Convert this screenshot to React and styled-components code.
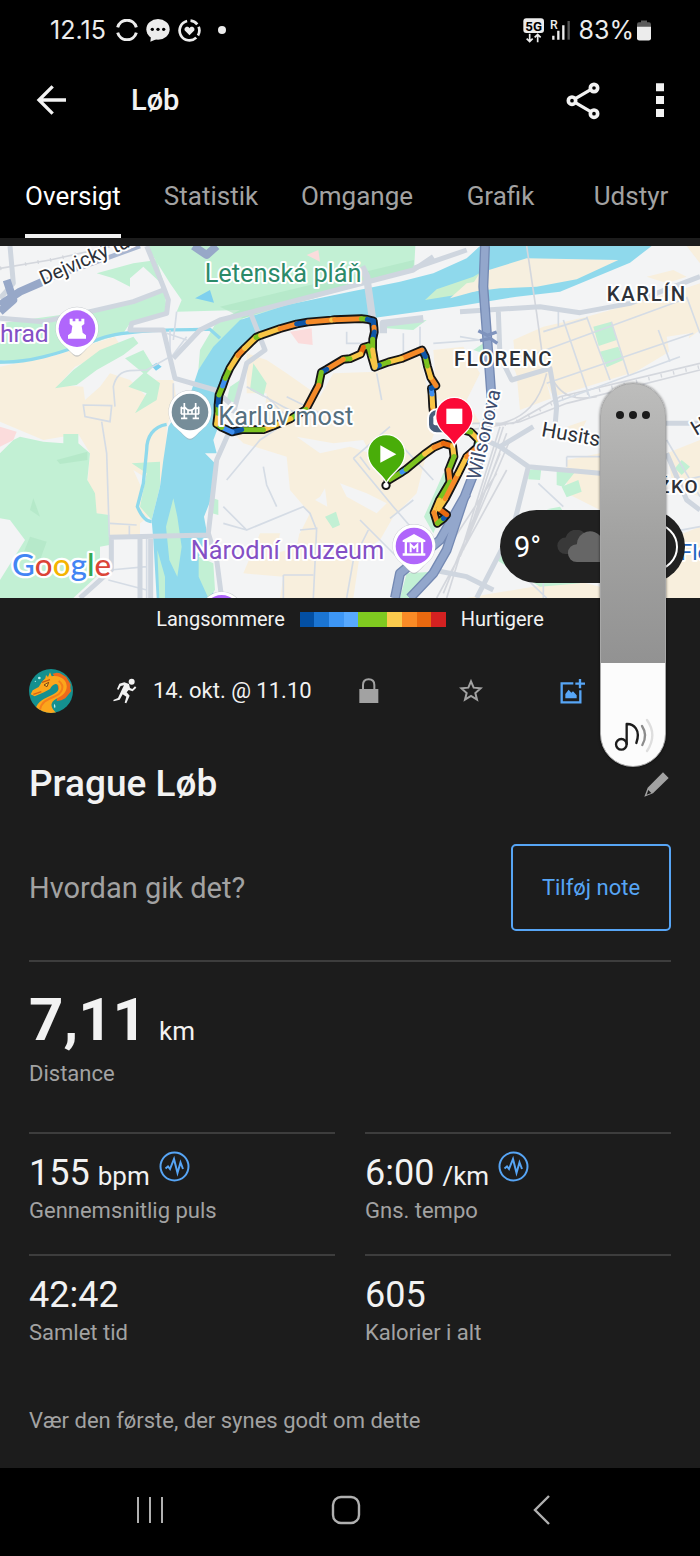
import React, { useState } from "react";
import styled, { createGlobalStyle } from "styled-components";

const GlobalStyle = createGlobalStyle`
  *, *::before, *::after { box-sizing: border-box; }
  body { margin: 0; background: #000; }
  button { appearance: none; border: 0; background: none; padding: 0; margin: 0; font: inherit; color: inherit; cursor: pointer; }
  svg { display: block; }
`;

const color = {
  surface: "#1c1c1c",
  text: "#f2f2f2",
  muted: "#a2a2a2",
  line: "#3d3d3d",
  accent: "#57a5f5",
};

/* ---------- Page frame ---------- */

const Page = styled.div`
  position: relative;
  overflow: hidden;
  display: flex;
  flex-direction: column;
  min-height: 100vh;
  background: #000;
  color: ${color.text};
  font-family: Roboto, "Liberation Sans", sans-serif;
`;

const StatusBar = styled.div`
  display: flex;
  align-items: center;
  justify-content: space-between;
  height: 60px;
  padding: 0 49px 0 50px;
  font-family: Inter, Roboto, sans-serif;
  font-size: 25px;
  line-height: 32px;
  color: #ececec;
`;

const StatusGroup = styled.div`
  display: flex;
  align-items: center;
  gap: ${(p) => p.$gap}px;
`;

const AppBar = styled.header`
  display: flex;
  align-items: center;
  height: 80px;
  padding: 0 36px;
`;

const AppTitle = styled.h1`
  flex: 1;
  margin: 0 0 0 64px;
  font-size: 29px;
  line-height: 36px;
  font-weight: 500;
`;

const IconButton = styled.button`
  display: flex;
  align-items: center;
  justify-content: center;
  margin-left: ${(p) => p.$before || 0}px;
`;

const Tabs = styled.nav`
  display: grid;
  grid-template-columns:
    minmax(0, 138fr) minmax(0, 138fr) minmax(0, 154fr)
    minmax(0, 133fr) minmax(0, 128fr);
  justify-items: center;
  padding: 0 5px 0 4px;
`;

const Tab = styled.button`
  padding: 40px 0 22px;
  font-size: 26px;
  line-height: 32px;
  white-space: nowrap;
  color: ${(p) => (p.$active ? "#fff" : color.muted)};
  border-bottom: 4px solid ${(p) => (p.$active ? color.text : "transparent")};
`;

const Content = styled.main`
  flex: 1;
  padding-top: 8px;
  background: ${color.surface};
`;

/* ---------- Map ---------- */

const MapPanel = styled.section`
  position: relative;
`;

const MapDrawing = styled.svg`
  width: 100%;
  height: auto;
  font-family: Roboto, sans-serif;
`;

const WeatherPill = styled.div`
  position: absolute;
  right: 15px;
  bottom: 15px;
  display: flex;
  align-items: center;
  gap: 16px;
  width: 185px;
  height: 73px;
  padding: 0 7px 0 14px;
  border-radius: 37px;
  background: #212121;
  color: #fff;
  font-size: 29px;
  line-height: 36px;
`;

const PillRing = styled.span`
  width: 48px;
  height: 48px;
  margin-left: auto;
  border: 2px solid #fff;
  border-radius: 50%;
`;

const Legend = styled.div`
  display: flex;
  align-items: center;
  justify-content: center;
  gap: 15px;
  height: 42px;
  font-size: 20px;
  line-height: 28px;
`;

const Scale = styled.span`
  display: grid;
  grid-template-columns: repeat(10, 1fr);
  width: 146px;
  height: 15px;
`;

const Swatch = styled.span`
  background: ${(p) => p.$color};
`;

/* ---------- Activity ---------- */

const MetaRow = styled.div`
  display: flex;
  align-items: center;
  height: 102px;
  padding: 0 29px;
  font-size: 22px;
  line-height: 28px;
`;

const Runner = styled.span`
  margin: 0 16px 0 40px;
`;

const MetaActions = styled.div`
  display: flex;
  margin-left: 6px;
`;

const MetaAction = styled.button`
  display: flex;
  justify-content: center;
  width: 102px;
`;

const TitleRow = styled.div`
  display: flex;
  align-items: center;
  justify-content: space-between;
  height: 84px;
  padding: 0 31px 0 29px;
`;

const Title = styled.h2`
  margin: 0;
  font-size: 37px;
  line-height: 44px;
  font-weight: 500;
`;

const NoteRow = styled.div`
  display: flex;
  align-items: center;
  justify-content: space-between;
  margin: 18px 29px 0;
  padding-bottom: 29px;
  border-bottom: 2px solid ${color.line};
`;

const NotePrompt = styled.p`
  margin: 0;
  font-size: 29px;
  line-height: 36px;
  color: ${color.muted};
`;

const NoteButton = styled.button`
  width: 160px;
  height: 87px;
  border: 2px solid ${color.accent};
  border-radius: 5px;
  font-size: 22px;
  line-height: 28px;
  color: ${color.accent};
`;

const Distance = styled.section`
  padding: 26px 29px 44px;
`;

const DistanceValue = styled.div`
  font-size: 60px;
  line-height: 64px;
  font-weight: 700;
`;

const Unit = styled.span`
  margin-left: ${(p) => p.$gap}px;
  font-size: 26px;
  line-height: 1;
  font-weight: 400;
`;

const Label = styled.div`
  margin-top: ${(p) => p.$gap}px;
  font-size: 22px;
  line-height: 28px;
  color: ${color.muted};
`;

const StatGrid = styled.div`
  display: grid;
  grid-template-columns: 1fr 1fr;
  column-gap: 30px;
  padding: 0 29px;
`;

const Stat = styled.section`
  padding: 17px 0 29px;
  border-top: 2px solid ${color.line};
`;

const StatTop = styled.div`
  display: flex;
  align-items: flex-start;
  gap: 9px;
`;

const StatValue = styled.div`
  font-size: 36px;
  line-height: 44px;
`;

const LikeHint = styled.p`
  margin: 0;
  padding: 31px 29px 33px;
  font-size: 22px;
  line-height: 28px;
  color: ${color.muted};
`;

const SystemNav = styled.footer`
  display: grid;
  grid-template-columns: 1fr 1fr 1fr;
  justify-items: center;
  align-items: center;
  height: 88px;
  padding: 0 60px 4px 52px;
`;

/* ---------- Volume overlay ---------- */

const Volume = styled.label`
  position: absolute;
  top: 383px;
  right: 34px;
  width: 66px;
  height: 384px;
  border-radius: 33px;
  box-shadow: 0 0 3px rgba(0, 0, 0, 0.6);
`;

const VolumeRange = styled.input`
  appearance: none;
  writing-mode: vertical-lr;
  direction: rtl;
  display: block;
  width: 100%;
  height: 100%;
  margin: 0;
  border: 1px solid #a8a8a8;
  border-radius: 33px;
  background: linear-gradient(
    to top,
    #fcfcfc ${(p) => p.$level}%,
    #929292 ${(p) => p.$level}%,
    #a2a2a1 60%,
    #bdbdbc 100%
  );
  &::-webkit-slider-thumb {
    appearance: none;
    width: 1px;
    height: 1px;
  }
`;

const VolumeMenu = styled.span`
  position: absolute;
  top: 27px;
  left: 15px;
  pointer-events: none;
`;

const VolumeIcon = styled.span`
  position: absolute;
  bottom: 14px;
  left: 14px;
  pointer-events: none;
`;

/* ---------- Icons ---------- */

function Icon({ box, w, h, children, ...rest }) {
  return (
    <svg viewBox={box} width={w} height={h} fill="none" aria-hidden="true" {...rest}>
      {children}
    </svg>
  );
}

const SyncIcon = () => (
  <Icon box="348 57 66 66" w={22} h={22} stroke="#ececec" strokeWidth="9">
    <path d="M353 82 A29 29 0 0 1 409 82 M353 98 A29 29 0 0 0 409 98" />
  </Icon>
);

const ChatIcon = () => (
  <Icon box="437 54 72 72" w={24} h={24}>
    <ellipse cx="473" cy="88" rx="35" ry="31" fill="#ececec" />
    <path d="M452 108 L450 125 L475 115Z" fill="#ececec" />
    <g fill="#000">
      <circle cx="456" cy="88" r="5" />
      <circle cx="473" cy="88" r="5" />
      <circle cx="490" cy="88" r="5" />
    </g>
  </Icon>
);

const HeartRingIcon = () => (
  <Icon box="531 57 68 68" w={23} h={23} stroke="#ececec" strokeWidth="8">
    <path d="M558 63 A29 29 0 1 0 585 112 M590 106 A29 29 0 0 0 592 80 M588 73 A29 29 0 0 0 568 62" />
    <path
      d="M565 105 L551 91 C547 81 560 75 565 84 C570 75 583 81 579 91Z"
      fill="#ececec"
      stroke="none"
    />
  </Icon>
);

const DotIcon = () => (
  <Icon box="648 78 24 24" w={8} h={8}>
    <circle cx="660" cy="90" r="12" fill="#ececec" />
  </Icon>
);

const FiveGIcon = () => (
  <Icon box="515 50 66 75" w={22} h={25}>
    <rect x="516" y="51" width="62" height="44" rx="9" fill="#ececec" />
    <text
      x="547"
      y="88"
      textAnchor="middle"
      fontSize="40"
      fontWeight="700"
      fontFamily="Roboto, sans-serif"
      fill="#000"
    >
      5G
    </text>
    <path
      d="M535 97 V120 M526 112 L535 121 L544 112 M559 123 V99 M550 108 L559 99 L568 108"
      stroke="#ececec"
      strokeWidth="5"
    />
  </Icon>
);

const SignalIcon = () => (
  <Icon box="596 57 63 66" w={21} h={22}>
    <text x="596" y="88" fontSize="37" fontWeight="500" fontFamily="Roboto, sans-serif" fill="#ececec">
      R
    </text>
    <path d="M606 107 V119 M621 92 V119 M636 76 V119" stroke="#ececec" strokeWidth="7" />
    <path d="M652 63 V119" stroke="#555" strokeWidth="7" />
  </Icon>
);

const BatteryIcon = () => (
  <Icon box="860 60 42 62" w={14} h={21}>
    <path d="M872 61 H890 V66 H896 Q902 66 902 73 V84 H860 V73 Q860 66 866 66 H872Z" fill="#5b5b5b" />
    <path d="M860 80 H902 V114 Q902 121 895 121 H867 Q860 121 860 114Z" fill="#ececec" />
  </Icon>
);

const BackArrow = () => (
  <Icon box="108 252 93 96" w={31} h={32} stroke="#f2f2f2" strokeWidth="10">
    <path d="M198 300 H117 M158 259 L117 300 L158 341" />
  </Icon>
);

const ShareIcon = () => (
  <Icon box="648 240 102 117" w={34} h={39} stroke="#f2f2f2" strokeWidth="11">
    <circle cx="666" cy="299" r="11" />
    <circle cx="732" cy="261" r="11" />
    <circle cx="732" cy="338" r="11" />
    <path d="M676 293 L722 266 M676 305 L722 332" strokeWidth="10" />
  </Icon>
);

const MoreIcon = () => (
  <Icon box="917 248 24 102" w={8} h={34}>
    <path d="M917 249h24v24h-24z M917 287h24v24h-24z M917 326h24v24h-24z" fill="#f2f2f2" />
  </Icon>
);

const Avatar = () => (
  <Icon box="87 84 132 132" w={44} h={44}>
    <defs>
      <clipPath id="avatarClip">
        <circle cx="153" cy="150" r="66" />
      </clipPath>
    </defs>
    <g clipPath="url(#avatarClip)">
      <rect x="87" y="84" width="132" height="132" fill="#14908f" />
      <path
        d="M158 98 L170 95 L180 97 L190 103 L199 108 L206 120 L212 130 L211 142 L214 150 L206 160 L196 172 L184 178 L170 180 L176 150 L170 118Z"
        fill="#ee6a1c"
      />
      <path
        d="M150 94 L155 106 C190 100 208 128 197 150 C188 170 160 172 155 188 C152 200 162 210 176 222 L106 222 C102 188 126 176 148 166 C172 156 182 144 174 132 C166 124 156 132 150 144 L132 154 L104 166 L92 160 L98 148 L116 138 L126 122 L136 112 L138 102 L144 108Z"
        fill="#fba61c"
      />
      <path d="M176 120 C196 134 188 158 160 168 C140 176 124 184 120 206" stroke="#f47f1b" strokeWidth="6" />
      <path d="M100 160 L124 152" stroke="#d96413" strokeWidth="4" />
      <path d="M132 132 L146 124 L141 137Z" fill="#ffe14a" stroke="#7a3d12" strokeWidth="3" />
      <path d="M126 124 L150 116" stroke="#c65a10" strokeWidth="4" />
      <circle cx="118" cy="111" r="4" fill="#b8f0ee" />
      <circle cx="106" cy="121" r="2" fill="#b8f0ee" />
      <path d="M163 188 q6 8 1 14 q-5 -6 -1 -14Z" fill="#b8f0ee" />
    </g>
  </Icon>
);

const RunnerIcon = () => (
  <Icon box="338 112 72 78" w={24} h={26}>
    <circle cx="394" cy="123" r="9" fill="#f2f2f2" />
    <path
      d="M357 129 L372 125 L386 130 L389 142 L396 145 L404 137 L408 141 L397 152 L385 148 L379 155 L388 165 L378 188 L373 186 L378 168 L367 161 L358 177 L340 182 L339 178 L353 172 L364 148 L371 134 L361 136 L354 148 L350 145Z"
      fill="#f2f2f2"
    />
  </Icon>
);

const LockIcon = () => (
  <Icon box="26 233 60 78" w={20} h={26}>
    <path d="M38 270 V254 Q38 237 55 237 Q72 237 72 254 V270" stroke="#a2a2a2" strokeWidth="6" />
    <rect x="27" y="266" width="57" height="42" fill="#a2a2a2" />
  </Icon>
);

const StarIcon = () => (
  <Icon box="326 236 72 72" w={24} h={24} stroke="#a2a2a2" strokeWidth="6">
    <path d="M362 246 L370 265 L391 267 L375 281 L380 301 L362 290 L344 301 L349 281 L333 267 L354 265Z" />
  </Icon>
);

const AddImageIcon = () => (
  <Icon box="633 229 78 78" w={26} h={26} stroke={color.accent} strokeWidth="7">
    <path d="M673 245 H638 V302 H694 V266 M693 232 V260 M679 246 H708" />
    <path d="M649 290 V277 L659 264 L667 273 L672 269 L683 281 V290Z" fill={color.accent} stroke="none" />
  </Icon>
);

const PencilIcon = () => (
  <Icon box="881 518 75 75" w={25} h={25}>
    <path
      d="M938 519 L955 536 L908 582 L882 592 L892 565Z M894 572 L889 586 L903 581Z"
      fill="#a2a2a2"
      fillRule="evenodd"
    />
  </Icon>
);

const PulseIcon = () => (
  <Icon box="0 0 31 31" w={31} h={31} stroke={color.accent} strokeWidth="2">
    <circle cx="15.5" cy="15.5" r="14" />
    <path d="M6.5 17.5 L9 15.5 L11 18 L15 8 L18.5 22 L21.5 11.5 L24 18" />
  </Icon>
);

const MenuDots = () => (
  <Icon box="0 0 36 10" w={36} h={10}>
    <g fill="#1c1c1c">
      <circle cx="5" cy="5" r="4" />
      <circle cx="18" cy="5" r="4" />
      <circle cx="31" cy="5" r="4" />
    </g>
  </Icon>
);

const MusicIcon = () => (
  <Icon box="793 351 120 105" w={40} h={35} strokeWidth="7" strokeLinecap="round">
    <circle cx="815" cy="430" r="16" stroke="#1c1c1c" />
    <path d="M831 429 V369 C852 368 874 386 860 426" stroke="#1c1c1c" strokeLinejoin="round" />
    <path d="M877 375 Q895 402 878 432" stroke="#8c8c8c" />
    <path d="M892 357 Q924 402 892 450" stroke="#dedede" />
  </Icon>
);

const RecentsIcon = () => (
  <Icon box="0 0 28 28" w={28} h={28} stroke="#b0b0b0" strokeWidth="2">
    <path d="M2 1 V27 M14 1 V27 M26 1 V27" />
  </Icon>
);

const HomeIcon = () => (
  <Icon box="0 0 30 30" w={30} h={30} stroke="#b0b0b0" strokeWidth="2.4">
    <rect x="2" y="2" width="26" height="26" rx="8" />
  </Icon>
);

const NavBackIcon = () => (
  <Icon box="0 0 20 30" w={20} h={30} stroke="#b0b0b0" strokeWidth="2.4">
    <path d="M17 1 L3 15 L17 29" />
  </Icon>
);

/* ---------- Map drawing (three units to a pixel) ---------- */

const pace = {
  n: "#0f56a8",
  b: "#3e8ff0",
  g: "#7cc320",
  y: "#f8c545",
  o: "#f58a28",
  d: "#e8690f",
};

/* Each point carries the pace colour of the stretch that leads to it. */
const northLoop = [
  [1305, 560], [1298, 500, "o"], [1296, 462, "y"], [1294, 445, "b"], [1308, 437, "n"],
  [1292, 412, "o"], [1282, 378, "y"], [1276, 350, "g"], [1266, 330, "n"], [1204, 356, "o"],
  [1166, 366, "y"], [1138, 376, "g"], [1124, 382, "n"], [1114, 348, "y"], [1106, 318, "g"],
  [1090, 322, "g"], [1082, 342, "d"], [1050, 356, "y"], [1030, 358, "g"], [980, 388, "o"],
  [964, 397, "n"], [956, 436, "g"], [918, 508, "o"], [872, 536, "g"], [820, 558, "y"],
  [790, 569, "y"], [725, 569, "g"], [696, 576, "n"], [665, 562, "b"], [650, 552, "g"],
  [654, 520, "y"], [654, 495, "g"], [657, 465, "n"], [668, 438, "g"], [676, 415, "b"],
  [690, 384, "g"], [714, 346, "y"], [734, 325, "o"], [768, 292, "y"], [782, 286, "g"],
  [840, 266, "y"], [890, 252, "o"], [924, 246, "n"], [995, 240, "o"], [1004, 239, "y"],
  [1084, 236, "o"], [1102, 238, "g"], [1120, 243, "n"], [1122, 262, "n"], [1123, 276, "o"],
  [1118, 298, "n"], [1118, 330, "g"], [1126, 378, "y"],
];

const southLoop = [
  [1164, 722], [1206, 696, "g"], [1218, 688, "b"], [1274, 642, "g"], [1302, 622, "y"],
  [1330, 610, "o"], [1358, 618, "d"], [1362, 650, "y"], [1346, 690, "g"], [1350, 726, "o"],
  [1318, 780, "g"], [1302, 818, "y"], [1312, 850, "o"], [1330, 836, "g"], [1340, 824, "n"],
  [1316, 806, "d"], [1336, 776, "y"], [1374, 702, "o"], [1400, 650, "y"], [1432, 622, "o"],
  [1436, 600, "g"], [1412, 576, "y"], [1390, 570, "g"],
];

function Route({ points }) {
  const outline = points.map(([x, y]) => `${x},${y}`).join(" ");
  return (
    <g fill="none" strokeLinecap="round" strokeLinejoin="round">
      <polyline points={outline} stroke="#151515" strokeWidth="26" />
      {points.slice(1).map(([x, y, c], i) => (
        <path
          key={i}
          d={`M${points[i][0]} ${points[i][1]} L${x} ${y}`}
          stroke={pace[c]}
          strokeWidth="15"
        />
      ))}
    </g>
  );
}

function PlacePin({ x, y, fill, children }) {
  return (
    <g transform={`translate(${x} ${y})`}>
      <path
        d="M0 84 C-12 84 -22 66 -38 52 A65 65 0 1 1 38 52 C22 66 12 84 0 84Z"
        fill="#a9afb5"
        opacity="0.6"
      />
      <path d="M0 80 C-12 80 -22 64 -38 51 A64 64 0 1 1 38 51 C22 64 12 80 0 80Z" fill="#fff" />
      <circle r="55" fill={fill} />
      {children}
    </g>
  );
}

function RoutePin({ x, y, fill, children }) {
  return (
    <g transform={`translate(${x} ${y})`}>
      <path
        d="M0 88 C-8 60 -56 44 -56 -2 A56 56 0 1 1 56 -2 C56 44 8 60 0 88Z"
        fill={fill}
        stroke="#fff"
        strokeWidth="4"
      />
      {children}
    </g>
  );
}

const Place = styled.text`
  font-weight: ${(p) => (p.$district ? 500 : 400)};
  letter-spacing: ${(p) => (p.$district ? "5px" : "normal")};
  stroke: #fff;
  stroke-width: 12px;
  stroke-linejoin: round;
  paint-order: stroke;
`;

function MapText({ size, fill = "#2d3138", district, ...rest }) {
  return <Place fontSize={size} fill={fill} $district={district} {...rest} />;
}

function ActivityMap() {
  return (
    <MapDrawing viewBox="0 18 2100 1056" role="img" aria-label="Kort over ruten">
      <rect y="18" width="2100" height="1056" fill="#f3f4f5" />

      {/* Built-up areas */}
      <g fill="#f8efdd">
        <path d="M0 380 L170 345 L345 290 L362 318 L225 380 L175 435 L250 440 L255 480 L300 440 L330 400 L390 420 L440 470 L450 420 L520 420 L530 480 L500 560 L500 640 L480 740 L400 690 L460 820 L420 850 L420 890 L328 890 L328 825 L285 820 L262 740 L270 640 L235 582 L130 600 L0 545Z" />
        <path d="M740 340 L800 360 L860 400 L960 470 L1000 400 L1130 395 L1260 350 L1290 480 L1310 560 L1280 640 L1250 760 L1180 830 L1140 900 L1080 940 L1060 1074 L840 1074 L850 1010 L730 1000 L780 880 L900 880 L930 820 L870 750 L860 650 L730 610 L700 580 L790 560 L800 460 L740 460Z" />
        <path d="M1300 330 L1390 320 L1440 400 L1400 480 L1440 550 L1380 560 L1310 470Z" />
        <path d="M1540 300 L1630 260 L1760 230 L2010 160 L2100 130 L2100 270 L2060 300 L2000 340 L1900 400 L1770 440 L1640 480 L1560 510Z" />
        <path d="M1940 110 L2020 90 L2060 110 L2000 130Z M2060 18 L2100 18 L2100 70Z" />
        <path d="M1540 380 L1650 350 L1660 400 L1560 430Z" />
        <path d="M1380 160 L1440 100 L1580 55 L1850 60 L1610 140 L1500 150Z" />
        <path d="M1700 660 L1800 640 L1800 810 L1700 760Z M2000 640 L2100 600 L2100 770 L2020 740Z M2000 900 L2100 860 L2100 1074 L1980 1074Z" />
        <path d="M1480 1060 L1720 1020 L1800 1040 L1800 1074 L1400 1074Z M1700 560 L1760 540 L1740 580Z" />
      </g>
      <g fill="#f3f4f5">
        <path d="M960 770 L975 745 L982 800 L945 780Z M890 590 L1000 610 L1090 600 L1110 640 L1050 620 L960 640Z" />
        <path d="M1020 730 L1100 760 L1160 790 L1130 820 L1040 770Z M2000 290 L2070 280 L2060 320 L2010 350Z" />
        <path d="M840 880 L900 870 L890 920 L830 940Z" />
        <path d="M1640 430 L1660 470 L1760 440 L1890 400 L1900 430 L1660 500Z" />
      </g>

      {/* Parks */}
      <g fill="#c2f0d4">
        <path d="M440 18 L1246 18 L1242 95 L1060 140 L860 190 L730 235 L640 330 L595 390 L600 330 L650 245 L720 210 L530 215 L545 180 L510 130Z" />
        <path d="M290 100 L400 70 L470 60 L495 140 L430 80 L390 115 L390 140 L340 115Z" />
        <path d="M0 250 L220 220 L410 180 L495 155 L500 215 L390 250 L370 280 L290 305 L150 345 L0 372Z" />
        <path d="M165 445 L220 390 L300 330 L400 290 L415 310 L370 345 L290 390 L230 435Z" />
        <path d="M375 355 L430 330 L460 380 L440 400 L480 430 L470 480 L405 520 L440 460 L385 440 L430 400Z" />
        <path d="M0 640 L40 600 L60 590 L130 605 L190 610 L190 582 L235 582 L235 610 L270 640 L262 720 L285 760 L290 820 L328 825 L328 915 L300 920 L300 1000 L220 1074 L0 1074 L0 1020 L75 900 L30 840 L0 835Z" />
        <path d="M395 670 L480 665 L480 740 L455 840 L420 800 L440 700Z M640 775 L655 780 L655 825 L636 820Z" />
        <path d="M760 370 L800 430 L790 470 L750 450Z M690 440 L720 420 L710 490 L680 480Z" />
        <path d="M975 830 L1008 815 L1020 855 L998 865Z M1272 830 L1330 700 L1352 690 L1350 760 L1300 880Z" />
        <path d="M1220 1000 L1300 995 L1230 1074 L1200 1074Z M1150 250 L1280 240 L1240 270 L1160 265Z" />
        <path d="M1780 260 L1834 245 L1850 300 L1796 318Z M1800 335 L1855 320 L1870 360 L1820 382Z M1420 330 L1450 310 L1450 340Z" />
        <path d="M1585 690 L1624 685 L1620 720 L1585 718Z M1670 690 L1730 690 L1690 740 L1670 735Z M1685 740 L1735 720 L1745 755 L1700 772Z M1640 808 L1680 800 L1690 815Z" />
        <path d="M1490 960 L1540 860 L1740 1030 L1620 1040Z M2025 685 L2045 660 L2070 680 L2045 705Z" />
      </g>
      <path d="M0 560 L50 575 L40 600 L0 620Z M870 275 L935 265 L938 315 L895 310Z M920 45 L955 30 L960 65Z" fill="#fbdcdc" />
      <g fill="#aee5c3" opacity="0.6">
        <path d="M170 660 L262 635 L262 660 L180 672Z M90 810 L100 775 L120 830Z M70 940 L90 890 L140 905 L120 960Z" />
        <path d="M660 200 L1242 60 L1240 90 L730 235Z" />
      </g>

      {/* Water */}
      <path
        d="M1440 18 L1955 18 L1890 68 L1680 155 L1550 170 L1380 198 L1120 234 L900 248 L780 285 L710 345 L665 450 L645 540 L655 560 L640 600 L650 640 L615 640 L645 670 L640 760 L612 830 L625 900 L596 950 L625 1000 L640 1020 L640 1074 L470 1074 L460 900 L455 840 L480 740 L490 660 L505 560 L575 450 L595 390 L640 320 L720 240 L860 195 L1050 155 L1200 125 L1300 100 L1400 55Z"
        fill="#8fd9ec"
      />
      <path d="M1380 160 L1440 98 L1580 55 L1855 60 L1730 118 L1610 140 L1500 145Z" fill="#f6efdf" />
      <path d="M1275 180 L1310 148 L1420 110 L1440 98 L1400 160Z" fill="#c9efce" />
      <path d="M1350 175 L1400 130 L1460 120 L1440 150Z" fill="#f6efdf" />
      <g fill="#c2f0d4">
        <path d="M520 775 L532 830 L545 920 L532 1010 L508 960 L498 860Z M472 930 L495 1010 L495 1074 L478 1074Z M596 950 L640 970 L645 1050 L625 1074 L596 1010Z" />
      </g>
      <g fill="none" stroke="#8fd9ec" strokeWidth="10">
        <path d="M500 553 C460 560 440 590 440 630 L430 730 L412 800 C425 830 440 845 455 845" />
        <path d="M0 366 C100 370 200 330 290 300 C360 270 500 270 630 268 L660 295" />
      </g>
      <path d="M585 175 L630 150 L642 188Z M455 378 L470 368 L485 380 L468 392Z" fill="#7fd0ee" />

      {/* Railways */}
      <g fill="none" stroke="#d4d7dd" strokeWidth="5">
        <path d="M0 85 L150 60 L330 20 M1580 18 L1610 220 L1625 330 M1380 550 L1540 550 L1680 470 L2100 370 M1380 575 L1560 545 L1700 490 L2100 390 M1480 555 C1580 540 1620 480 1640 400 M1650 400 C1680 480 1740 480 1790 470" />
        <path d="M1510 560 L1400 900 M1520 580 L1390 930 M1530 600 L1380 950 M1500 560 L1340 1074 M1500 640 L1330 1060 M1520 690 L1310 1074 M1490 700 L1320 960" />
      </g>
      <g stroke="#d4d7dd" strokeWidth="11" strokeDasharray="4 34" fill="none">
        <path d="M0 85 L150 60 L330 20 M1400 562 L1540 550 L1680 478 L2100 380" />
      </g>

      {/* Streets */}
      <g fill="none" stroke="#d5dce5" strokeWidth="5">
        <path d="M345 500 L340 440 Q350 395 390 392 L440 390 L510 350 L510 270 M250 495 L335 497 L330 545 L255 530Z M305 545 L320 640 L328 890 M330 850 L410 855 M388 855 V890" />
        <path d="M330 990 L440 980 M325 1020 L440 1050 M440 890 V1074 M530 215 L520 300 M515 350 L560 290 M500 280 L560 300 M520 430 L520 500" />
        <path d="M680 720 L780 600 L840 560 M670 800 L740 870 L910 800 L930 820 L950 870 M740 870 L670 850 M830 800 L800 735 L790 680 M900 870 L950 865 L940 1074 M850 1005 L940 1005 M850 1005 V1074" />
        <path d="M740 440 L850 500 L930 540 M860 470 L960 520 M800 470 L870 540 M1060 655 L1180 800 L1240 870 M1080 650 L1110 690 M1060 655 L1170 560 M1180 590 L1300 720 M1170 835 L1240 780 M1105 870 L1060 960 L1040 1074 M1080 840 L1200 960" />
        <path d="M1040 275 V310 L1100 310 M1130 400 L1145 480 M1210 280 V340 M1260 260 V330 M1300 310 L1440 300 M1380 290 L1440 300" />
        <path d="M1630 275 L1760 235 M1690 240 L1770 475 M1760 230 L1830 420 M1834 245 L1885 405 M1610 340 L2060 175 M1640 430 L2080 280 M1975 270 L2010 365 M2060 170 L2100 280 M1660 490 L2040 350 M1675 215 V260" />
        <path d="M1700 650 L1800 650 M1700 650 L1700 680 M1615 730 L1690 800 M1500 940 L1640 1074 M1630 1030 V1074 M2000 600 L2100 770 M2010 730 L2100 710 M1990 880 L2100 860" />
      </g>
      <g fill="none" stroke="#cfd6df" strokeWidth="15" strokeLinejoin="round">
        <path d="M440 18 L490 140 L505 180 L500 220 L395 250 L390 270 L490 270 L525 415 L645 450 L690 490" />
        <path d="M30 18 L40 130 L0 175 M0 235 L130 245 L270 215 L400 185 L490 150 M520 355 L600 270 L660 240 L720 225 L1240 90 L1300 50" />
        <path d="M328 892 L625 885 M334 892 V990 L240 1074 M420 890 V1074 M452 890 V1074 M690 570 L650 660 L625 880 L650 960 L665 1074" />
        <path d="M750 215 L795 330 L740 370 L700 520 M1240 85 L1400 30" />
        <path d="M1380 215 L1620 200 L1740 218 L1890 190 L2100 110 M1495 215 L1500 350 L1535 420 L1650 385 L1670 500 L1665 560" />
        <path d="M1390 570 L1500 620 L1585 680 L1800 700 M1500 620 L1600 560 M1585 680 L1540 860 L1430 1074 M1800 550 H2100 M2000 640 L2060 780 L2100 810 M1300 990 L1400 1010 L1480 1050" />
        <path d="M1150 280 V250 L1270 236 M1085 80 L1100 110 L1118 240" strokeWidth="22" />
      </g>

      {/* Motorways */}
      <g fill="none" strokeLinejoin="round">
        <path d="M1455 18 L1450 140 L1462 300 L1475 480 L1445 640 L1390 780 L1340 930 L1300 1000 L1230 1074 M1400 760 L1320 900 L1200 1000 L1185 1074" stroke="#7489b3" strokeWidth="30" />
        <path d="M1455 18 L1450 140 L1462 300 L1475 480 L1445 640 L1390 780 L1340 930 L1300 1000 L1230 1074 M1400 760 L1320 900 L1200 1000 L1185 1074" stroke="#93a7cc" strokeWidth="22" />
        <path d="M1435 272 L1462 286 L1490 276 M1440 302 L1470 295 L1492 310" stroke="#7f93bd" strokeWidth="10" />
        <path d="M0 195 L60 155 L140 120 M0 215 L40 180 L20 120 M580 18 L620 45 L650 18" stroke="#97a8c8" strokeWidth="24" />
        <path d="M140 120 L420 18" stroke="#a8b6d0" strokeWidth="14" />
      </g>

      <Route points={southLoop} />
      <Route points={northLoop} />
      <circle cx="1158" cy="736" r="11" fill="#fff" stroke="#151515" strokeWidth="6" />

      {/* Place names */}
      <MapText size="60" transform="translate(130 136) rotate(-24)">Dejvický tunel</MapText>
      <MapText size="76" fill="#2b8a69" x="614" y="126">Letenská pláň</MapText>
      <MapText size="74" fill="#8450c5" x="0" y="305">hrad</MapText>
      <MapText size="61" district x="1820" y="184">KARLÍN</MapText>
      <MapText size="61" district x="1362" y="377">FLORENC</MapText>
      <MapText size="76" fill="#56707f" x="655" y="556">Karlův most</MapText>
      <MapText size="60" fill="#3c4c6e" transform="translate(1440 722) rotate(-77)">Wilsonova</MapText>
      <MapText size="62" transform="translate(1622 588) rotate(10)">Husitská</MapText>
      <MapText size="62" transform="translate(2088 588) rotate(-30)">H</MapText>
      <MapText size="57" district x="1974" y="760">ŽKO</MapText>
      <MapText size="66" fill="#1f66c0" x="2040" y="960">Flo</MapText>
      <MapText size="76" fill="#8450c5" x="572" y="958">Národní muzeum</MapText>

      <text x="36" y="1008" fontSize="94" fontWeight="500" fontFamily="Lato, sans-serif" stroke="#fff" strokeWidth="14" strokeLinejoin="round" paintOrder="stroke">
        <tspan fill="#4285f4">G</tspan>
        <tspan fill="#db4437">o</tspan>
        <tspan fill="#f4b400">o</tspan>
        <tspan fill="#4285f4">g</tspan>
        <tspan fill="#34a853">l</tspan>
        <tspan fill="#db4437">e</tspan>
      </text>

      {/* Pins */}
      <PlacePin x="231" y="266" fill="#b066fb">
        <path d="M-22 -30 h9 v8 h8 v-8 h10 v8 h8 v-8 h9 v16 l-8 6 l3 20 l10 8 v10 h-54 v-10 l10 -8 l3 -20 l-8 -6Z" fill="#fff" />
      </PlacePin>
      <PlacePin x="570" y="516" fill="#768d99">
        <path d="M-17 -27 V18 M17 -27 V18 M-27 6 H27 M-27 -16 Q-20 -6 -17 -16 Q0 6 17 -16 Q20 -6 27 -16 M-27 19 H-8 M8 19 H27 M-6 -8 V6 M6 -8 V6 M-26 -14 V6 M26 -14 V6" fill="none" stroke="#fff" strokeWidth="5" />
      </PlacePin>
      <PlacePin x="1242" y="918" fill="#b066fb">
        <path d="M-34 -12 V-17 L0 -36 L34 -17 V-12 H28 V22 H34 V29 H-34 V22 H-28 V-12Z" fill="#fff" />
        <rect x="-21" y="-11" width="42" height="33" fill="#b066fb" />
        <path d="M-10 19 V-4 L0 6 L10 -4 V19" fill="none" stroke="#fff" strokeWidth="6" />
      </PlacePin>
      <PlacePin x="665" y="1120" fill="#b066fb" />

      <rect x="1284" y="508" width="70" height="72" rx="26" fill="#4a5f7c" stroke="#fff" strokeWidth="6" />
      <rect x="1300" y="526" width="40" height="30" rx="6" fill="#fff" />

      <RoutePin x="1159" y="642" fill="#49ad09">
        <path d="M-18 -26 L30 1 L-18 26Z" fill="#fff" />
      </RoutePin>
      <RoutePin x="1363" y="530" fill="#fb0936">
        <rect x="-24" y="-24" width="48" height="46" fill="#fff" />
      </RoutePin>
    </MapDrawing>
  );
}

const CloudIcon = () => (
  <Icon box="290 330 130 98" w={43} h={33}>
    <path d="M316 402 a25 25 0 0 1 0 -50 a34 34 0 0 1 66 4 l20 20 v26Z" fill="#393939" />
    <path d="M350 426 a26 26 0 0 1 0 -54 a40 40 0 0 1 74 -20 v74Z" fill="#666" />
  </Icon>
);

/* ---------- Screen ---------- */

const tabNames = ["Oversigt", "Statistik", "Omgange", "Grafik", "Udstyr"];

const paceScale = [
  "#034fa3", "#1b75d3", "#3d96f5", "#57a9ff", "#7fca20",
  "#7fca20", "#fbcb4d", "#fa8b26", "#ea690f", "#d32121",
];

const stats = [
  { value: "155", unit: "bpm", label: "Gennemsnitlig puls", chart: true },
  { value: "6:00", unit: "/km", label: "Gns. tempo", chart: true },
  { value: "42:42", label: "Samlet tid" },
  { value: "605", label: "Kalorier i alt" },
];

export default function App() {
  const [active, setActive] = useState(tabNames[0]);
  const [level, setLevel] = useState(27);

  return (
    <Page>
      <GlobalStyle />
      <StatusBar>
        <StatusGroup $gap={17}>
          <StatusGroup $gap={8}>
            <StatusGroup $gap={10}>
              <span>12.15</span>
              <SyncIcon />
            </StatusGroup>
            <ChatIcon />
            <HeartRingIcon />
          </StatusGroup>
          <DotIcon />
        </StatusGroup>
        <StatusGroup $gap={8}>
          <StatusGroup $gap={5}>
            <FiveGIcon />
            <SignalIcon />
          </StatusGroup>
          <StatusGroup $gap={3}>
            <span>83%</span>
            <BatteryIcon />
          </StatusGroup>
        </StatusGroup>
      </StatusBar>

      <AppBar>
        <IconButton aria-label="Tilbage">
          <BackArrow />
        </IconButton>
        <AppTitle>Løb</AppTitle>
        <IconButton aria-label="Del">
          <ShareIcon />
        </IconButton>
        <IconButton aria-label="Mere" $before={56}>
          <MoreIcon />
        </IconButton>
      </AppBar>

      <Tabs>
        {tabNames.map((name) => (
          <Tab key={name} $active={name === active} onClick={() => setActive(name)}>
            {name}
          </Tab>
        ))}
      </Tabs>

      <Content>
        <MapPanel>
          <ActivityMap />
          <WeatherPill>
            <span>9°</span>
            <CloudIcon />
            <PillRing />
          </WeatherPill>
        </MapPanel>

        <Legend>
          <span>Langsommere</span>
          <Scale>
            {paceScale.map((c, i) => (
              <Swatch key={i} $color={c} />
            ))}
          </Scale>
          <span>Hurtigere</span>
        </Legend>

        <MetaRow>
          <Avatar />
          <Runner>
            <RunnerIcon />
          </Runner>
          <time>14. okt. @ 11.10</time>
          <MetaActions>
            <MetaAction aria-label="Privatliv">
              <LockIcon />
            </MetaAction>
            <MetaAction aria-label="Favorit">
              <StarIcon />
            </MetaAction>
            <MetaAction aria-label="Tilføj billede">
              <AddImageIcon />
            </MetaAction>
          </MetaActions>
        </MetaRow>

        <TitleRow>
          <Title>Prague Løb</Title>
          <IconButton aria-label="Rediger">
            <PencilIcon />
          </IconButton>
        </TitleRow>

        <NoteRow>
          <NotePrompt>Hvordan gik det?</NotePrompt>
          <NoteButton>Tilføj note</NoteButton>
        </NoteRow>

        <Distance>
          <DistanceValue>
            7,11<Unit $gap={12}>km</Unit>
          </DistanceValue>
          <Label $gap={8}>Distance</Label>
        </Distance>

        <StatGrid>
          {stats.map((s) => (
            <Stat key={s.label}>
              <StatTop>
                <StatValue>
                  {s.value}
                  {s.unit && <Unit $gap={8}>{s.unit}</Unit>}
                </StatValue>
                {s.chart && <PulseIcon />}
              </StatTop>
              <Label $gap={2}>{s.label}</Label>
            </Stat>
          ))}
        </StatGrid>

        <LikeHint>Vær den første, der synes godt om dette</LikeHint>
      </Content>

      <SystemNav>
        <IconButton aria-label="Seneste">
          <RecentsIcon />
        </IconButton>
        <IconButton aria-label="Hjem">
          <HomeIcon />
        </IconButton>
        <IconButton aria-label="Gå tilbage">
          <NavBackIcon />
        </IconButton>
      </SystemNav>

      <Volume aria-label="Lydstyrke">
        <VolumeRange
          type="range"
          min="0"
          max="100"
          value={level}
          $level={level}
          onChange={(e) => setLevel(Number(e.target.value))}
        />
        <VolumeMenu>
          <MenuDots />
        </VolumeMenu>
        <VolumeIcon>
          <MusicIcon />
        </VolumeIcon>
      </Volume>
    </Page>
  );
}
